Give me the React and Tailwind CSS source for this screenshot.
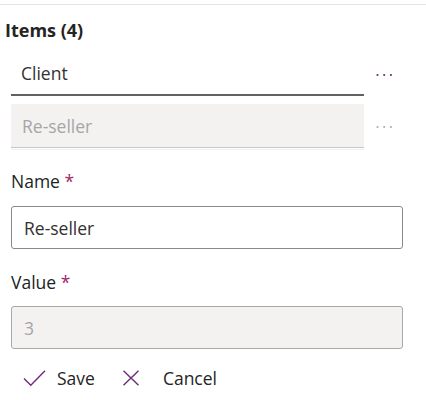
import React from "react";

function Dots({ color }) {
  return (
    <svg width="18" height="4" viewBox="0 0 18 4" className="ml-[12px] shrink-0">
      <circle cx="1.5" cy="2" r="1.1" fill={color} />
      <circle cx="8.2" cy="2" r="1.1" fill={color} />
      <circle cx="14.9" cy="2" r="1.1" fill={color} />
    </svg>
  );
}

export default function App() {
  return (
    <div
      className="w-[426px] h-[400px] bg-white text-[#323130] overflow-hidden"
      style={{ fontFamily: '"Open Sans", "Noto Sans", sans-serif' }}
    >
      <div className="h-[4px]" />
      <div className="h-px bg-[#e4e4e4]" />
      <div className="pl-[11px] flex flex-col">
        <div className="mt-[13px] ml-[-6px] h-[24px] leading-[24px] text-[18px] font-bold text-[#252423]">
          Items (4)
        </div>

        <div className="mt-[12px] flex items-center">
          <div className="w-[353px] h-[42px] border-b-2 border-[#616161] pl-[10px] pb-[2px] flex items-center text-[17.5px] leading-[24px]">
            Client
          </div>
          <Dots color="#6e2a78" />
        </div>

        <div className="mt-[8px] flex items-center">
          <div className="w-[353px] flex flex-col">
            <div className="h-[44px] bg-[#f3f2f1] border-b border-[#c8c6c4] pl-[11px] flex items-center text-[17.5px] leading-[24px] text-[#a6a6a6]">
              Re-seller
            </div>
            <div className="mt-px h-px bg-[#efefef]" />
          </div>
          <Dots color="#a8b0b4" />
        </div>

        <div className="mt-[19px] h-[24px] leading-[24px] text-[17.5px] text-[#201f1e]">
          Name <span className="text-[#a0276a]">*</span>
        </div>
        <div className="mt-[13px] w-[392px] h-[43px] border border-[#8a8886] rounded-[3px] pl-[12px] flex items-center text-[17.5px] leading-[24px]">
          Re-seller
        </div>

        <div className="mt-[21px] h-[24px] leading-[24px] text-[17.5px] text-[#201f1e]">
          Value <span className="text-[#a0276a]">*</span>
        </div>
        <div className="mt-[12px] w-[392px] h-[43px] bg-[#f3f2f1] border border-[#a8a8a8] rounded-[3px] pl-[12px] flex items-center text-[17.5px] leading-[24px] text-[#a6a6a6]">
          3
        </div>

        <div className="mt-[17px] h-[24px] flex items-center text-[17.5px] leading-[24px] text-[#252423]">
          <svg width="24" height="18" viewBox="0 0 24 18" className="ml-[12px] shrink-0">
            <path d="M1 9.5 L7.8 16.2 L22 1.8" fill="none" stroke="#6e2a78" strokeWidth="1.4" />
          </svg>
          <span className="ml-[10px]">Save</span>
          <svg width="18" height="16" viewBox="0 0 18 16" className="ml-[27px] shrink-0">
            <path d="M1.5 0.8 L16.5 15.2 M16.5 0.8 L1.5 15.2" fill="none" stroke="#6e2a78" strokeWidth="1.4" />
          </svg>
          <span className="ml-[23px]">Cancel</span>
        </div>
      </div>
    </div>
  );
}
